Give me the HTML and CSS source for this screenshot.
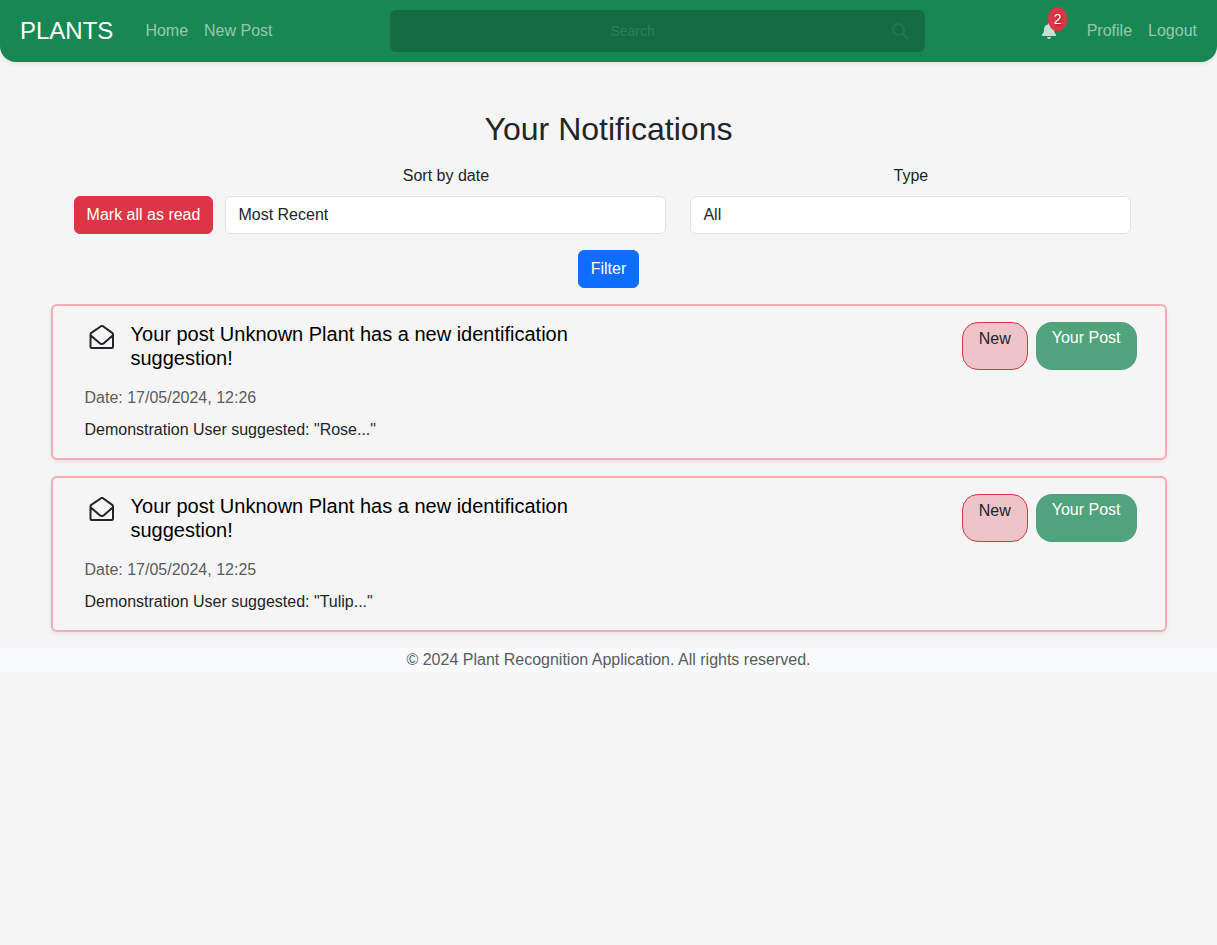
FILE: index.html
```html
<!DOCTYPE html>
<html lang="en">
<head>
<meta charset="utf-8">
<meta name="viewport" content="width=device-width, initial-scale=1">
<title>Your Notifications</title>
<link rel="stylesheet" href="styles.css">
</head>
<body>
<header class="navbar">
  <nav class="nav-left" aria-label="Main">
    <a class="brand" href="#">PLANTS</a>
    <a class="nav-link" href="#">Home</a>
    <a class="nav-link" href="#">New Post</a>
  </nav>
  <form class="search">
    <input class="search-input" type="search" placeholder="Search" aria-label="Search">
    <button class="search-button" type="submit" aria-label="Submit search">
      <svg width="16" height="16" viewBox="0 0 16 16" fill="none" stroke="currentColor" stroke-width="2" stroke-linecap="round" aria-hidden="true"><circle cx="6.5" cy="6.5" r="5.5"/><path d="M10.7 10.7 15 15"/></svg>
    </button>
  </form>
  <nav class="nav-right" aria-label="Account">
    <a class="bell" href="#" aria-label="Notifications, 2 unread">
      <svg width="16" height="16" viewBox="0 0 16 16" fill="currentColor" aria-hidden="true"><path d="M8 0a1 1 0 0 0-1 1v.6A5 5 0 0 0 3 6.500v.6c0 1.500-.5 2.900-1.500 4L.9 11.800A.75.75 0 0 0 1.400 13h13.200a.75.75 0 0 0 .5-1.200l-.6-.7a6 6 0 0 1-1.500-4v-.6a5 5 0 0 0-4-4.900V1a1 1 0 0 0-1-1zM6 14a2 2 0 0 0 4 0z"/></svg>
      <span class="badge">2</span>
    </a>
    <a class="nav-link" href="#">Profile</a>
    <a class="nav-link" href="#">Logout</a>
  </nav>
</header>

<main class="container">
  <h1 class="title">Your Notifications</h1>
  <form class="filters">
    <div class="filter-row">
      <button class="btn btn-danger" type="button">Mark all as read</button>
      <div class="field">
        <label for="sort">Sort by date</label>
        <select id="sort" class="select"><option>Most Recent</option><option>Oldest</option></select>
      </div>
      <div class="field">
        <label for="type">Type</label>
        <select id="type" class="select"><option>All</option></select>
      </div>
    </div>
    <button class="btn btn-primary" type="submit">Filter</button>
  </form>

  <article class="card">
    <div class="card-head">
      <div class="card-heading">
        <svg class="envelope" width="26" height="26" viewBox="0 0 26 26" aria-hidden="true"><path d="M1.500 10.500q0-1 .8-1.600L12 2.200q1-.6 2 0l9.200 6.700q.8.600.8 1.600v12.300q0 1.200-1.200 1.200H2.700q-1.200 0-1.200-1.200zM1.800 11.500l8.700 7.600q2.300 1.700 4.600 0l8.600-7.600" fill="none" stroke="currentColor" stroke-width="2" stroke-linejoin="round"/></svg>
        <h2 class="card-title">Your post Unknown Plant has a new identification suggestion!</h2>
      </div>
      <div class="pills"><span class="pill pill-new">New</span><span class="pill pill-post">Your Post</span></div>
    </div>
    <p class="date">Date: 17/05/2024, 12:26</p>
    <p class="text">Demonstration User suggested: "Rose..."</p>
  </article>

  <article class="card">
    <div class="card-head">
      <div class="card-heading">
        <svg class="envelope" width="26" height="26" viewBox="0 0 26 26" aria-hidden="true"><path d="M1.500 10.500q0-1 .8-1.600L12 2.200q1-.6 2 0l9.200 6.700q.8.600.8 1.600v12.300q0 1.200-1.200 1.200H2.700q-1.200 0-1.200-1.200zM1.800 11.500l8.700 7.600q2.300 1.700 4.600 0l8.600-7.600" fill="none" stroke="currentColor" stroke-width="2" stroke-linejoin="round"/></svg>
        <h2 class="card-title">Your post Unknown Plant has a new identification suggestion!</h2>
      </div>
      <div class="pills"><span class="pill pill-new">New</span><span class="pill pill-post">Your Post</span></div>
    </div>
    <p class="date">Date: 17/05/2024, 12:25</p>
    <p class="text">Demonstration User suggested: "Tulip..."</p>
  </article>
</main>

<footer class="footer">© 2024 Plant Recognition Application. All rights reserved.</footer>
</body>
</html>
```
FILE: styles.css
```css
* { box-sizing: border-box; }

body {
  margin: 0;
  background: #f5f5f5;
  color: #212529;
  font: 16px/24px "Liberation Sans", Arial, sans-serif;
}

h1, h2, p { margin: 0; font-weight: 400; }
a { text-decoration: none; }
button, input, select { font: inherit; }

.navbar {
  display: flex;
  align-items: center;
  justify-content: space-between;
  padding: 10px 12px 10px 20px;
  background: #198754;
  border-radius: 0 0 16px 16px;
  box-shadow: 0 2px 4px rgba(0, 0, 0, 0.075);
}

.nav-left, .nav-right { display: flex; align-items: center; }
.brand { margin-right: 24px; color: #fff; font-size: 24px; line-height: 36px; }
.nav-link { padding: 8px; color: rgba(255, 255, 255, 0.55); }

.search {
  display: flex;
  align-items: center;
  flex: 0 1 44vw;
  height: 42px;
  background: #146c43;
  border-radius: 6px;
}
.search-input {
  flex: 1;
  min-width: 0;
  padding: 0 12px 0 26px;
  border: 0;
  outline: 0;
  background: none;
  color: #fff;
  font-size: 14px;
  text-align: center;
}
.search-input::placeholder { color: #2a8259; opacity: 1; }
.search-button {
  display: flex;
  padding: 8px 17px;
  border: 0;
  background: none;
  color: #21794e;
}

.bell {
  position: relative;
  display: flex;
  margin-right: 16px;
  padding: 0 6px;
  color: rgba(255, 255, 255, 0.75);
}
.badge {
  position: absolute;
  top: -16px;
  left: 13px;
  padding: 0 6px;
  border-radius: 50%;
  background: #dc3545;
  color: #fff;
  font-size: 14px;
  text-shadow: 1px 1px 3px rgba(0, 0, 0, 0.4);
}

.container {
  max-width: 1140px;
  margin: 0 auto;
  padding: 48px 12px 16px;
}
.title {
  margin-bottom: 16px;
  font-size: 32px;
  line-height: 38px;
  text-align: center;
}

.filters {
  display: flex;
  flex-direction: column;
  align-items: center;
  gap: 16px;
  margin-bottom: 16px;
}
.filter-row {
  display: flex;
  align-items: flex-end;
  justify-content: center;
  width: 100%;
}
.field {
  display: flex;
  flex-direction: column;
  gap: 8px;
  width: 41.6667%;
  padding: 0 12px;
  text-align: center;
}
.select {
  width: 100%;
  height: 38px;
  padding: 6px 12px;
  appearance: none;
  border: 1px solid #dee2e6;
  border-radius: 6px;
  background: #fff;
  color: #212529;
}
.btn {
  flex: none;
  height: 38px;
  padding: 6px 12px;
  border: 1px solid;
  border-radius: 6px;
  color: #fff;
}
.btn-danger { border-color: #dc3545; background: #dc3545; }
.btn-primary { border-color: #0d6efd; background: #0d6efd; }

.card {
  padding: 16px 28px 16px 32px;
  border: 2px solid #f4acb4;
  border-radius: 6px;
  box-shadow: 0 2px 4px rgba(0, 0, 0, 0.075);
}
.card + .card { margin-top: 16px; }
.card-head {
  display: flex;
  justify-content: space-between;
  margin-bottom: 16px;
}
.card-heading {
  display: flex;
  gap: 16px;
  width: 50%;
  padding-left: 4px;
}
.envelope { flex: none; margin-top: 2px; }
.card-title { color: #000; font-size: 20px; line-height: 24px; }
.pills { display: flex; gap: 8px; }
.pill { padding: 4px 16px; border-radius: 16px; white-space: nowrap; }
.pill-new {
  border: 1px solid #dc3545;
  background: rgba(220, 53, 69, 0.25);
}
.pill-post { background: rgba(25, 135, 84, 0.75); color: #fff; }
.date { margin-bottom: 8px; color: #595c5f; }

.footer { background: #f8fafc; color: #595c5f; text-align: center; }
```
